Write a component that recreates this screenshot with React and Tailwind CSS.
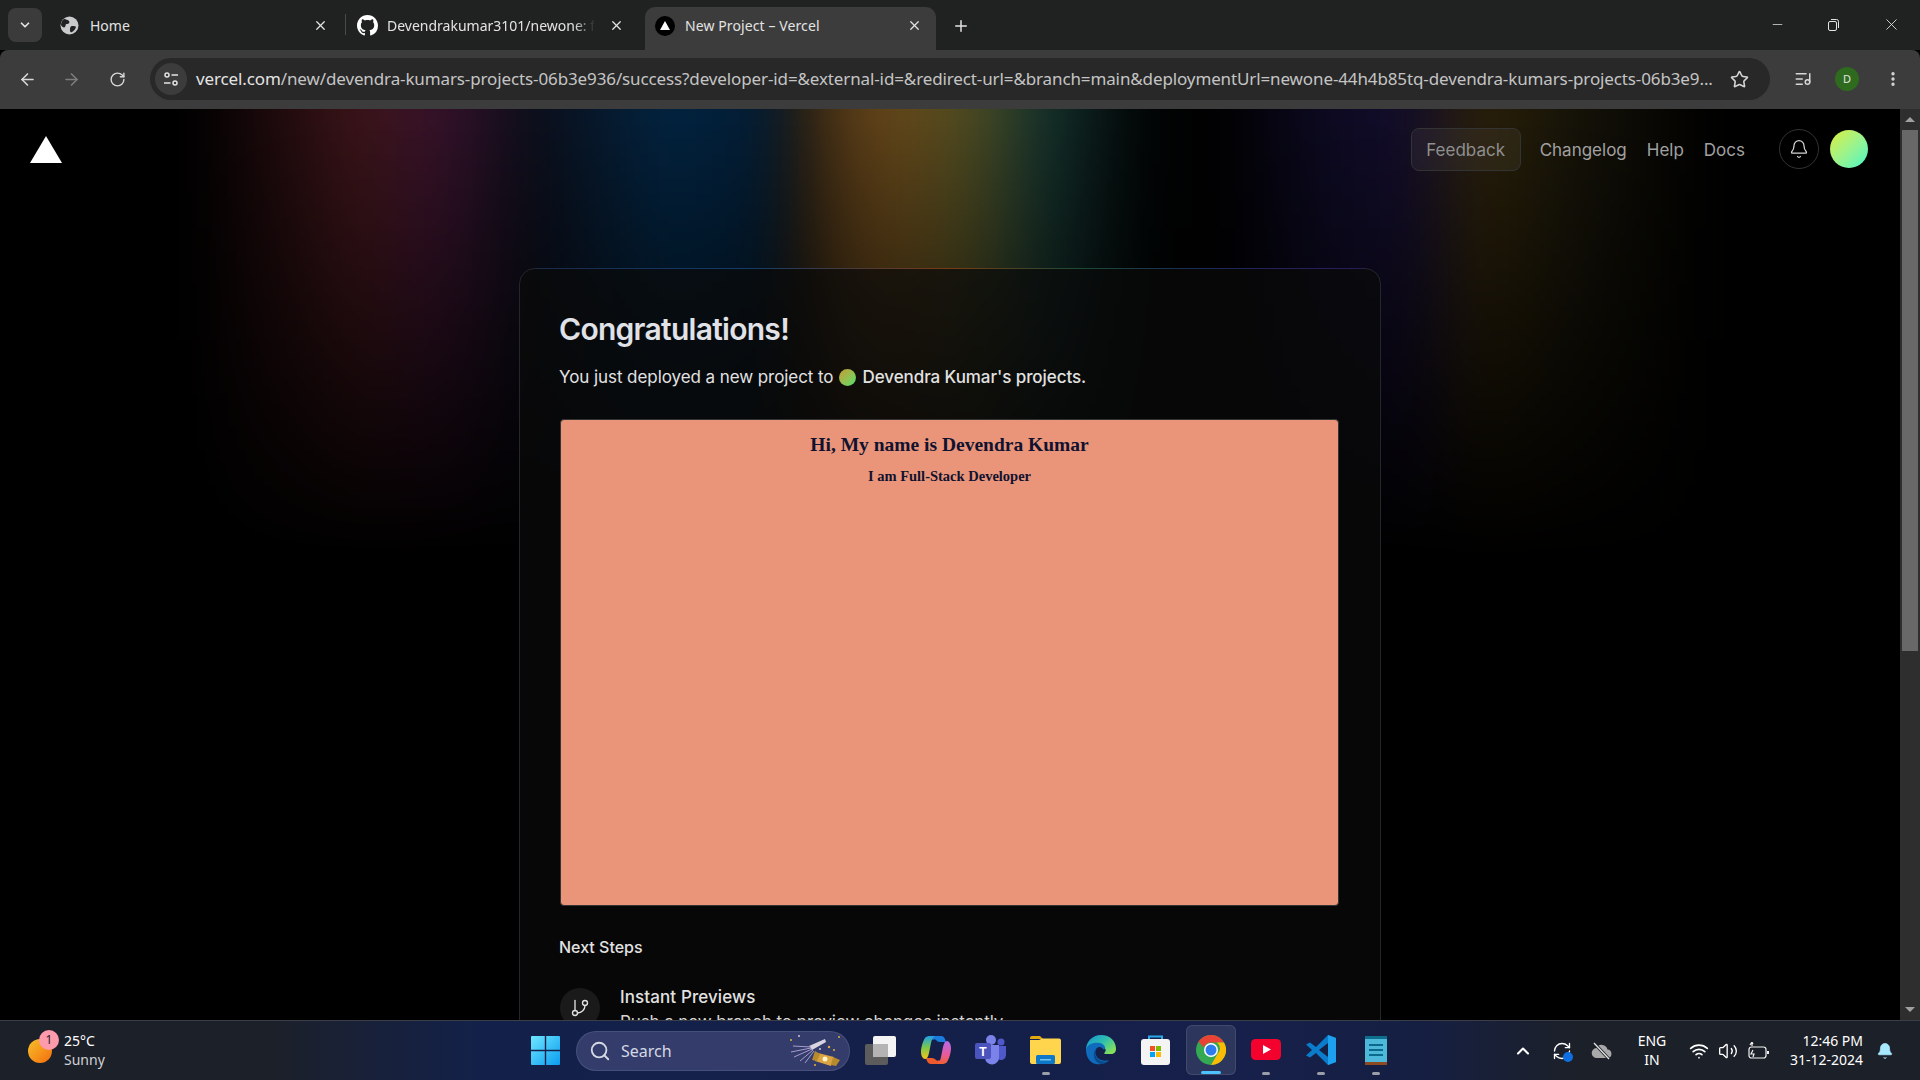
import { ArrowLeft, ArrowRight, RotateCw, Star, Plus, X, Minus, ChevronDown, ChevronUp, Search, Bell, GitBranch, Wifi, Volume2, MoreVertical, RefreshCw, ListMusic } from 'lucide-react';

const sans = { fontFamily: '"Noto Sans", sans-serif' };

function WinLogo() {
  return (
    <svg width="29" height="29" viewBox="0 0 29 29">
      <defs>
        <linearGradient id="win" x1="0" y1="0" x2="1" y2="1">
          <stop offset="0" stopColor="#6fe6ff" />
          <stop offset="1" stopColor="#0a9df0" />
        </linearGradient>
      </defs>
      <path fill="url(#win)" d="M1 0h12.800v13.800H0V1a1 1 0 0 1 1-1zM15.200 0H28a1 1 0 0 1 1 1v12.800H15.200zM0 15.200h13.800V29H1a1 1 0 0 1-1-1zM15.200 15.200H29V28a1 1 0 0 1-1 1H15.200z" />
    </svg>
  );
}

function TaskView() {
  return (
    <svg width="32" height="29" viewBox="0 0 32 29">
      <rect x="0" y="8" width="23" height="21" rx="2" fill="#5c5c5c" />
      <rect x="8" y="0" width="23" height="21" rx="2" fill="#f4f4f4" />
      <rect x="8" y="8" width="15" height="13" fill="#b4b4b4" />
    </svg>
  );
}

function Copilot() {
  return (
    <svg width="30" height="30" viewBox="0 0 30 30">
      <defs>
        <linearGradient id="cpa" x1="0" y1="0" x2="0" y2="1">
          <stop offset="0" stopColor="#1fa0e8" />
          <stop offset=".5" stopColor="#7cc84a" />
          <stop offset="1" stopColor="#f5c518" />
        </linearGradient>
        <linearGradient id="cpb" x1="0" y1="0" x2="0" y2="1">
          <stop offset="0" stopColor="#b46be8" />
          <stop offset=".6" stopColor="#e85a9a" />
          <stop offset="1" stopColor="#f06030" />
        </linearGradient>
      </defs>
      <path fill="#1b7ce0" d="M8 1h12c2 0 3 1 4 3l1 3h-6c-2 0-3-1-4-2-1-1-2-1-3 0z" />
      <path fill="#ef5a2c" d="M22 29H10c-2 0-3-1-4-3l-1-3h6c2 0 3 1 4 2 1 1 2 1 3 0z" />
      <path fill="url(#cpa)" d="M9 1h5c-2 1-3 3-4 7l-2 10c-1 4-2 6-4 6-2 0-4-3-4-7 0-5 2-11 4-14 1-1.500 3-2 5-2z" />
      <path fill="url(#cpb)" d="M21 29h-5c2-1 3-3 4-7l2-10c1-4 2-6 4-6 2 0 4 3 4 7 0 5-2 11-4 14-1 1.500-3 2-5 2z" />
    </svg>
  );
}

function Teams() {
  return (
    <svg width="32" height="30" viewBox="0 0 32 30">
      <circle cx="16" cy="5" r="5" fill="#7b83eb" />
      <circle cx="26" cy="7" r="3.500" fill="#5059c9" />
      <path fill="#5059c9" d="M21 11h10v9a5 5 0 0 1-8 4z" />
      <path fill="#7b83eb" d="M9 10h15v12a7 7 0 0 1-14 1z" />
      <rect x="0" y="8" width="16" height="16" rx="2" fill="#4b53bc" />
      <text x="8" y="21" textAnchor="middle" fontSize="12" fontWeight="700" fill="#fff" fontFamily="Liberation Sans">T</text>
    </svg>
  );
}

function Folder() {
  return (
    <svg width="31" height="28" viewBox="0 0 31 28">
      <path fill="#e2a90f" d="M0 2a2 2 0 0 1 2-2h8l3 3h-13z" />
      <path fill="#ffd54d" d="M0 4h9l3-1.500h17a2 2 0 0 1 2 2V26a2 2 0 0 1-2 2H2a2 2 0 0 1-2-2z" />
      <rect x="6" y="19" width="19" height="9" rx="1.500" fill="#0f78c8" />
      <rect x="10" y="23" width="11" height="1.500" fill="#6ec6f5" />
    </svg>
  );
}

function Edge() {
  return (
    <svg width="30" height="30" viewBox="0 0 30 30">
      <defs>
        <linearGradient id="edg" x1="0" y1="0" x2="1" y2="0.700">
          <stop offset="0" stopColor="#1593d8" />
          <stop offset=".55" stopColor="#2fbfae" />
          <stop offset="1" stopColor="#86e05a" />
        </linearGradient>
      </defs>
      <path fill="url(#edg)" d="M15 0c9 0 15 6 15 14 0 3-2 5-5 5h-6c-1 0-1-1 0-2 1-1 1-3-1-5-2-2-6-3-10-1C4 13 1 17 0 15 0 7 6 0 15 0z" />
      <path fill="#0f6cbd" d="M0 15c0-3 3-6 8-7 6-1 11 1 11 5 0 1-1 2-2 1-1-2-4-3-6-1-3 2-2 8 2 11 3 2 7 2 10 1-3 3-8 5-13 4C4 28 0 22 0 15z" />
      <path fill="#0a4a8c" d="M11 14c-3 2-2 8 2 11 3 2 7 2 10 1-2 2-5 3-8 3-5-1-8-6-7-11 0-2 1-3 3-4z" />
    </svg>
  );
}

function Store() {
  return (
    <svg width="29" height="30" viewBox="0 0 29 30">
      <path d="M8 5V1.500h13V5" stroke="#2aa8e8" strokeWidth="2" fill="none" />
      <rect x="0" y="4" width="29" height="26" rx="3" fill="#f4f4f4" />
      <rect x="9" y="11" width="5" height="5" fill="#f25022" />
      <rect x="15" y="11" width="5" height="5" fill="#7fba00" />
      <rect x="9" y="17" width="5" height="5" fill="#00a4ef" />
      <rect x="15" y="17" width="5" height="5" fill="#ffb900" />
    </svg>
  );
}

function Chrome() {
  return (
    <svg width="30" height="30" viewBox="0 0 30 30">
      <circle cx="15" cy="15" r="15" fill="#34a853" />
      <path fill="#ea4335" d="M15 0a15 15 0 0 1 13 7.500H15a7.500 7.500 0 0 0-7 5L2.500 6.800A15 15 0 0 1 15 0z" />
      <path fill="#fbbc04" d="M28 7.500A15 15 0 0 1 15 30l6.500-11a7.500 7.500 0 0 0-.5-11.500z" />
      <circle cx="15" cy="15" r="7" fill="#fff" />
      <circle cx="15" cy="15" r="5.500" fill="#2f7cf0" />
    </svg>
  );
}

function YouTube() {
  return (
    <svg width="30" height="22" viewBox="0 0 30 22">
      <rect width="30" height="21" rx="4.500" fill="#f4022e" />
      <path fill="#fff" d="M12 6l8 4.500-8 4.500z" />
    </svg>
  );
}

function VsCode() {
  return (
    <svg width="30" height="30" viewBox="0 0 30 30">
      <path fill="#0a7ccb" d="M22 0 10 12 4 7.500 0 9.500 6 15l-6 5.500 4 2L10 18l12 12 8-3V3zm0 8v14l-9-7z" />
      <path fill="#1da1ee" d="M22 0l8 3v24l-8 3z" />
    </svg>
  );
}

function Notepad() {
  return (
    <svg width="22" height="30" viewBox="0 0 22 30">
      <rect x="0" y="1" width="22" height="26" fill="#4db8da" />
      <rect x="0" y="27" width="22" height="3" fill="#8b4a22" />
      <rect x="0" y="1" width="22" height="3" fill="#0f6e8c" />
      <rect x="4" y="9" width="14" height="2" fill="#0b6a8c" />
      <rect x="4" y="14" width="14" height="2" fill="#0b6a8c" />
      <rect x="4" y="19" width="14" height="2" fill="#0b6a8c" />
    </svg>
  );
}

function Party() {
  return (
    <svg width="56" height="36" viewBox="0 0 56 36">
      <path d="M22 13 38 6l1 3-14 8z" fill="#d9d5e0" />
      <g stroke="#a89ccc" strokeWidth="1" fill="none">
        <path d="M24 14 6 13M24 15 4 19M25 16 7 24M26 17 13 28M27 18 18 30" />
      </g>
      <path d="M31 20l16 4-3 9-16-5z" fill="#d9a441" />
      <path d="M28 18l5 3-3 7-5-1zM46 24l7 3-4 6-5-1z" fill="#b88a2e" />
      <circle cx="38" cy="26" r="2.500" fill="#fff3c8" />
      <circle cx="4" cy="7" r="1" fill="#e0b040" />
      <circle cx="12" cy="3" r="1" fill="#cfc6e6" />
      <circle cx="42" cy="14" r="1.200" fill="#e0b040" />
      <circle cx="52" cy="4" r="1" fill="#e0b040" />
      <circle cx="33" cy="16" r="1" fill="#cfc6e6" />
      <circle cx="47" cy="17" r="1" fill="#e0b040" />
      <circle cx="28" cy="32" r="1" fill="#e0b040" />
    </svg>
  );
}

function Github() {
  return (
    <svg width="21" height="21" viewBox="0 0 16 16" fill="#fff">
      <path d="M8 0C3.580 0 0 3.580 0 8c0 3.540 2.290 6.530 5.470 7.590.4.070.55-.17.55-.38 0-.19-.01-.82-.01-1.490-2.010.37-2.530-.49-2.690-.94-.09-.23-.48-.94-.82-1.130-.28-.15-.68-.52-.01-.53.63-.01 1.080.58 1.230.82.720 1.210 1.870.87 2.330.66.070-.52.280-.87.510-1.070-1.780-.2-3.640-.89-3.640-3.950 0-.87.310-1.590.820-2.150-.08-.2-.36-1.020.08-2.120 0 0 .67-.21 2.200.82.640-.18 1.320-.27 2-.27s1.360.09 2 .27c1.530-1.040 2.200-.82 2.200-.82.440 1.100.16 1.920.08 2.120.51.560.82 1.270.82 2.150 0 3.070-1.870 3.750-3.650 3.950.29.250.54.730.54 1.480 0 1.070-.01 1.930-.01 2.200 0 .21.150.46.550.38A8.010 8.010 0 0 0 16 8c0-4.420-3.580-8-8-8z" />
    </svg>
  );
}

function Globe() {
  return (
    <svg width="19" height="19" viewBox="0 0 19 19">
      <circle cx="9.500" cy="9.500" r="9" fill="#c8cacb" />
      <path fill="#202221" d="M4 3c2 0 4 1 5 2s0 3-2 3-1 2-2 3-3 0-4-2c0-2 1-5 3-6zM12 10c2 0 4 0 4 1s-2 4-4 5-2-1-2-3 1-3 2-3z" />
    </svg>
  );
}

function CloudSlash() {
  return (
    <svg width="22" height="18" viewBox="0 0 22 18">
      <path fill="#a9a9a9" d="M6 16a5 5 0 0 1-.6-10A6 6 0 0 1 16.500 7.500 4.300 4.300 0 0 1 17 16z" />
      <path d="M3 1l15 16" stroke="#1c2029" strokeWidth="3" />
      <path d="M3 1l15 16" stroke="#e6e6e6" strokeWidth="1.200" />
    </svg>
  );
}

function Battery() {
  return (
    <svg width="21" height="18" viewBox="0 0 21 18" fill="none" stroke="#f2f2f2" strokeWidth="1.200">
      <rect x="1" y="5" width="17" height="11" rx="2.500" />
      <path d="M20 9v3" strokeWidth="2" />
      <path d="M4 0v4M2 3l2-3 1 2M5 8 3 12h3l-1 3" />
    </svg>
  );
}

function VercelTab() {
  return (
    <div className="flex h-5 w-5 shrink-0 items-center justify-center rounded-full bg-black">
      <div className="h-0 w-0 border-x-[5px] border-b-[9px] border-x-transparent border-b-white" />
    </div>
  );
}

function Tabs() {
  return (
    <div className="flex h-[50px] shrink-0 items-end bg-[#202221] pl-2 text-[14px] text-[#e3e3e3]" style={sans}>
      <div className="mb-2 flex h-[34px] w-[34px] shrink-0 items-center justify-center rounded-lg bg-[#3b3b3b]">
        <ChevronDown size={14} strokeWidth={3} />
      </div>
      <div className="flex h-[43px] w-[303px] shrink-0 items-center pb-[6px] pl-[18px] pr-[17px]">
        <Globe />
        <span className="ml-[11px] flex-1">Home</span>
        <X size={15} strokeWidth={2} />
      </div>
      <div className="mb-[15px] h-[21px] w-px shrink-0 bg-[#4a4a4a]" />
      <div className="flex h-[43px] w-[299px] shrink-0 items-center pb-[6px] pl-[11px] pr-[21px]">
        <Github />
        <span className="ml-[9px] w-[208px] overflow-hidden whitespace-nowrap [mask-image:linear-gradient(to_right,black_90%,transparent)]">Devendrakumar3101/newone: first</span>
        <X size={15} strokeWidth={2} className="ml-auto" />
      </div>
      <div className="flex h-[43px] w-[291px] shrink-0 items-center rounded-t-[10px] bg-[#3c3c3c] pb-[6px] pl-[10px] pr-[14px]">
        <VercelTab />
        <span className="ml-[10px] flex-1 tracking-[0.1px]">New Project – Vercel</span>
        <X size={15} strokeWidth={2} />
      </div>
      <div className="mb-[15px] ml-[16px] flex">
        <Plus size={18} strokeWidth={2} />
      </div>
      <div className="mb-[16px] ml-auto flex items-center">
        <Minus size={15} strokeWidth={1.2} className="mr-[42px]" />
        <svg width="13" height="13" viewBox="0 0 13 13" fill="none" stroke="#e3e3e3" className="mr-[42px]">
          <rect x="1.500" y="3.500" width="8" height="9" rx="1.500" />
          <path d="M4 1.500h5.500a2 2 0 0 1 2 2V10" />
        </svg>
        <X size={19} strokeWidth={1.1} className="mr-[19px]" />
      </div>
    </div>
  );
}

function Toolbar() {
  return (
    <div className="flex h-[59px] shrink-0 items-center rounded-t-lg bg-[#3c3c3c] pb-[1px] text-[#d7d7d7]">
      <ArrowLeft size={19} strokeWidth={2} className="ml-[18px]" />
      <ArrowRight size={19} strokeWidth={2} className="ml-[25px] text-[#7d7d7d]" />
      <RotateCw size={17} strokeWidth={2} className="ml-[28px]" />
      <div className="ml-[24px] flex h-[42px] w-[1620px] shrink-0 items-center rounded-full bg-[#282828] pl-[5px] pr-[21px]">
        <div className="flex h-[32px] w-[32px] shrink-0 items-center justify-center rounded-full bg-[#3c3c3c]">
          <svg width="16" height="16" viewBox="0 0 16 16" fill="none" stroke="#e3e3e3" strokeWidth="1.500">
            <circle cx="4" cy="4" r="2" />
            <path d="M8.500 4H15M1 12h6.500" />
            <circle cx="12" cy="12" r="2" />
          </svg>
        </div>
        <span className="ml-[9px] flex-1 whitespace-nowrap text-[17px] tracking-[-0.12px] text-[#e3e3e3]" style={sans}>
          vercel.com<span className="text-[#c4c4c4]">/new/devendra-kumars-projects-06b3e936/success?developer-id=&external-id=&redirect-url=&branch=main&deploymentUrl=newone-44h4b85tq-devendra-kumars-projects-06b3e9...</span>
        </span>
        <Star size={19} strokeWidth={2} />
      </div>
      <ListMusic size={18} strokeWidth={2} className="ml-[24px]" />
      <div className="ml-[23px] flex h-6 w-6 items-center justify-center rounded-full bg-[#2e6b1f] text-[11px] text-[#e3e3e3]" style={sans}>D</div>
      <MoreVertical size={18} strokeWidth={2.5} className="ml-[25px]" />
    </div>
  );
}

function Glow() {
  return (
    <div className="pointer-events-none absolute inset-x-0 -top-[60px] h-[580px] bg-[linear-gradient(to_right,transparent_10%,#3b1418_19%,#36112a_23%,#0b0d18_28%,#02233f_35%,#021c34_40%,#1e1810_42%,#4d3416_44%,#644518_47%,#4c4a20_51%,#12302c_55%,#020405_60%,#000_64%,#0d0a22_70%,#120c2a_74%,#2a2008_78%,#141208_83%,transparent_90%)] blur-[24px] [mask-image:linear-gradient(to_bottom,black_12%,transparent_88%)]" />
  );
}

function Nav() {
  return (
    <div className="relative flex h-[80px] items-center pl-[30px] pr-[32px] text-[17px] text-[#a1a1a1]" style={{ fontFamily: 'Inter, sans-serif' }}>
      <div className="h-0 w-0 border-x-[16px] border-b-[27px] border-x-transparent border-b-white" />
      <div className="ml-auto flex h-[43px] w-[110px] items-center justify-center rounded-lg border border-[#333] bg-white/5 pt-[3px] text-[#8f8f8f]">Feedback</div>
      <span className="ml-[19px] pt-[4px]">Changelog</span>
      <span className="ml-[20px] pt-[4px]">Help</span>
      <span className="ml-[20px] pt-[4px]">Docs</span>
      <div className="ml-[34px] flex h-10 w-10 items-center justify-center rounded-full border border-[#333] text-[#d4d4d4]">
        <Bell size={20} strokeWidth={1.5} />
      </div>
      <div className="ml-[11px] h-[38px] w-[38px] rounded-full bg-gradient-to-br from-[#d9ee22] to-[#2ff5c4]" />
    </div>
  );
}

function Card() {
  return (
    <div className="relative mx-auto mt-[79px] w-[862px] rounded-t-[16px] border border-[#24262c] bg-[#0a0a0a]/70 px-[39px] pt-[40px]" style={{ fontFamily: 'Inter, sans-serif' }}>
      <div className="absolute inset-x-4 -top-px h-px bg-[linear-gradient(to_right,#1a2a4a,#123a6a_25%,#7a3a14_50%,#1e4a34_65%,#1a2a5a_80%,#2a1a5a)]" />
      <h1 className="text-[30px] font-semibold leading-[40px] tracking-[-0.72px] text-[#e0e2e7]">Congratulations!</h1>
      <p className="mt-[16px] flex items-center text-[17px] leading-[24px] tracking-[-0.07px] text-[#e2e2e2]">
        You just deployed a new project to
        <span className="mx-[6px] h-[17px] w-[17px] rounded-full bg-gradient-to-br from-[#c09a30] to-[#33e06a]" />
        <span className="font-medium">Devendra Kumar's projects.</span>
      </p>
      <div className="ml-px mt-[30px] h-[487px] w-[779px] overflow-hidden rounded-[4px] border border-[#333] bg-[#ea9579] text-center text-[#10122f]" style={{ fontFamily: '"Liberation Serif", serif' }}>
        <h2 className="mt-[13px] text-[19.5px] font-bold leading-[24px]">Hi, My name is Devendra Kumar</h2>
        <h3 className="mt-[9px] text-[14.5px] font-bold leading-[20px]">I am Full-Stack Developer</h3>
      </div>
      <h4 className="mt-[29px] text-[16px] font-medium leading-[24px] text-[#e2e2e2]">Next Steps</h4>
      <div className="ml-px mt-[26px] flex h-[80px] gap-[20px]">
        <div className="mt-[3px] flex h-10 w-10 items-center justify-center rounded-full bg-[#1a1a1a] text-[#e2e2e2]">
          <GitBranch size={20} strokeWidth={1.6} />
        </div>
        <div>
          <div className="text-[17px] font-medium leading-[24px] tracking-[0.1px] text-[#e2e2e2]">Instant Previews</div>
          <div className="text-[17px] leading-[26px] tracking-[-0.1px] text-[#d4d4d4]">Push a new branch to preview changes instantly</div>
        </div>
      </div>
    </div>
  );
}

function Scrollbar() {
  return (
    <div className="flex w-[20px] shrink-0 flex-col items-center bg-[#2e2e2e]">
      <div className="mt-[8px] h-0 w-0 border-x-[5px] border-b-[5px] border-x-transparent border-b-[#a0a0a0]" />
      <div className="mt-[8px] h-[521px] w-[16px] bg-[#686868]" />
      <div className="mb-[8px] mt-auto h-0 w-0 border-x-[5px] border-t-[5px] border-x-transparent border-t-[#a0a0a0]" />
    </div>
  );
}

function AppSlot({ children, dot, active }) {
  return (
    <div className={`relative mx-[2.5px] flex h-[50px] w-[50px] shrink-0 items-center justify-center rounded-md ${active ? 'border border-white/10 bg-white/10' : ''}`}>
      {children}
      {dot && <div className={`absolute bottom-0 h-[3px] rounded-full ${active ? 'w-5 bg-[#4cc2ff]' : 'w-2 bg-[#9a9ea8]'}`} />}
    </div>
  );
}

function Taskbar() {
  return (
    <div className="flex h-[60px] shrink-0 items-center border-t border-[#3b3e47] bg-[linear-gradient(to_right,#1c2029_0%,#1c2029_14%,#13214a_25%,#14204a_45%,#16204a_65%,#151f42_74%,#1c2029_82%,#1c2029_100%)] text-white" style={sans}>
      <div className="relative ml-[28px] h-[24px] w-[24px] rounded-full bg-gradient-to-br from-[#f5c02a] to-[#f26a0c]">
        <div className="absolute -right-[7px] -top-[9px] flex h-[20px] w-[20px] items-center justify-center rounded-full bg-[#fd9bad] text-[12px] text-[#222]">1</div>
      </div>
      <div className="mb-[2px] ml-[12px] w-[80px] text-[14px] leading-[19px]">
        <div>25°C</div>
        <div className="text-[#cfd1d6]">Sunny</div>
      </div>
      <div className="ml-[374px] flex w-[55px] justify-center">
        <WinLogo />
      </div>
      <div className="ml-[3px] flex h-[40px] w-[274px] items-center rounded-full border border-white/10 bg-[#333c6b] pl-[12px] pr-[6px] text-[#d5d8e5]">
        <Search size={22} strokeWidth={2} />
        <span className="ml-[10px] flex-1 text-[16px]">Search</span>
        <Party />
      </div>
      <div className="mb-[1px] ml-[3px] flex">
        <AppSlot><TaskView /></AppSlot>
        <AppSlot><Copilot /></AppSlot>
        <AppSlot><Teams /></AppSlot>
        <AppSlot dot><Folder /></AppSlot>
        <AppSlot><Edge /></AppSlot>
        <AppSlot><Store /></AppSlot>
        <AppSlot dot active><Chrome /></AppSlot>
        <AppSlot dot><YouTube /></AppSlot>
        <AppSlot dot><VsCode /></AppSlot>
        <AppSlot dot><Notepad /></AppSlot>
      </div>
      <div className="ml-[110px] flex items-center">
        <ChevronUp size={20} strokeWidth={2.5} />
        <div className="relative ml-[19px] flex">
          <RefreshCw size={20} strokeWidth={1.6} />
          <div className="absolute -bottom-[1px] -right-[1px] h-[10px] w-[10px] rounded-full bg-[#0f6fe0]" />
        </div>
        <div className="ml-[19px] flex"><CloudSlash /></div>
        <div className="mb-[2px] ml-[21px] w-[36px] text-center text-[14px] leading-[19px]">
          <div>ENG</div>
          <div>IN</div>
        </div>
        <Wifi size={20} strokeWidth={2} className="ml-[19px]" />
        <Volume2 size={20} strokeWidth={1.6} className="ml-[9px]" />
        <div className="ml-[10px] flex"><Battery /></div>
        <div className="mb-[2px] ml-[10px] w-[84px] text-right text-[14px] leading-[19px]">
          <div>12:46 PM</div>
          <div>31-12-2024</div>
        </div>
        <Bell size={18} fill="#a8e8ff" strokeWidth={1} className="ml-[13px] text-[#a8e8ff]" />
      </div>
    </div>
  );
}

export default function App() {
  return (
    <div className="flex h-screen w-full flex-col overflow-hidden bg-black">
      <Tabs />
      <Toolbar />
      <div className="flex min-h-0 flex-1">
        <div className="relative min-w-0 flex-1 overflow-hidden bg-black">
          <Glow />
          <Nav />
          <Card />
        </div>
        <Scrollbar />
      </div>
      <Taskbar />
    </div>
  );
}
